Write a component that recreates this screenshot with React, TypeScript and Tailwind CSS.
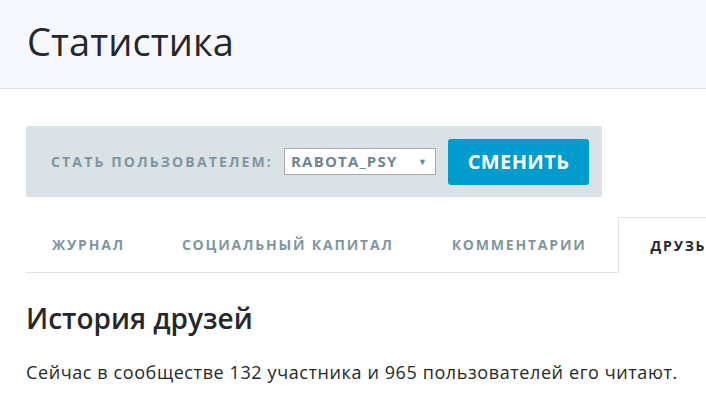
export default function App() {
  return (
    <div className="w-[706px] h-[402px] overflow-hidden bg-white text-[#242729]" style={{ fontFamily: "'Open Sans', sans-serif" }}>
      <div className="h-[89px] bg-[#f7f8fd] border-b border-[#dde5e9] pl-[27px] pt-[17px]">
        <h1 className="text-[38px] leading-[48px] font-normal tracking-[0.1px] text-[#25282a]">Статистика</h1>
      </div>
      <div className="px-[26px] pt-[37px]">
        <div className="w-[576px] h-[71px] bg-[#dae2e5] rounded-[2px] flex items-center pl-[25px]">
          <span className="text-[14px] font-bold tracking-[2.15px] uppercase text-[#7f96a1]">Стать пользователем:</span>
          <div className="ml-[11px] w-[152px] h-[27px] bg-white border border-[#a9a9a9] flex items-center pl-[6px] pr-[8px]">
            <span className="flex-1 text-[15px] font-bold tracking-[1.2px] text-[#6f8691]">RABOTA_PSY</span>
            <span className="text-[9px] text-[#6f8691]">▼</span>
          </div>
          <button className="ml-[12px] w-[141px] h-[46px] bg-[#009ccd] rounded-[3px] text-white text-[20px] font-bold tracking-[0.4px]">СМЕНИТЬ</button>
        </div>
        <div className="mt-[20px] flex items-end border-b border-[#dde5e9] h-[56px] w-[720px]">
          <div className="flex h-full items-center text-[14px] font-bold tracking-[1.8px] text-[#7f96a1]">
            <span className="pl-[26px] mr-[57px]">ЖУРНАЛ</span>
            <span className="mr-[58px]">СОЦИАЛЬНЫЙ КАПИТАЛ</span>
            <span className="mr-[31px]">КОММЕНТАРИИ</span>
          </div>
          <div className="h-[56px] mb-[-1px] bg-white border border-b-0 border-[#dde5e9] flex items-center pl-[32px] pr-[20px] text-[14px] font-bold tracking-[1.8px] text-[#242729] whitespace-nowrap">
            ДРУЗЬЯ
          </div>
        </div>
        <h2 className="mt-[27px] text-[28px] leading-[36px] font-semibold text-[#25282a]">История друзей</h2>
        <p className="mt-[24px] text-[18px] leading-[24px] tracking-[0.6px] whitespace-nowrap text-[#25282a]">Сейчас в сообществе 132 участника и 965 пользователей его читают.</p>
      </div>
    </div>
  );
}
